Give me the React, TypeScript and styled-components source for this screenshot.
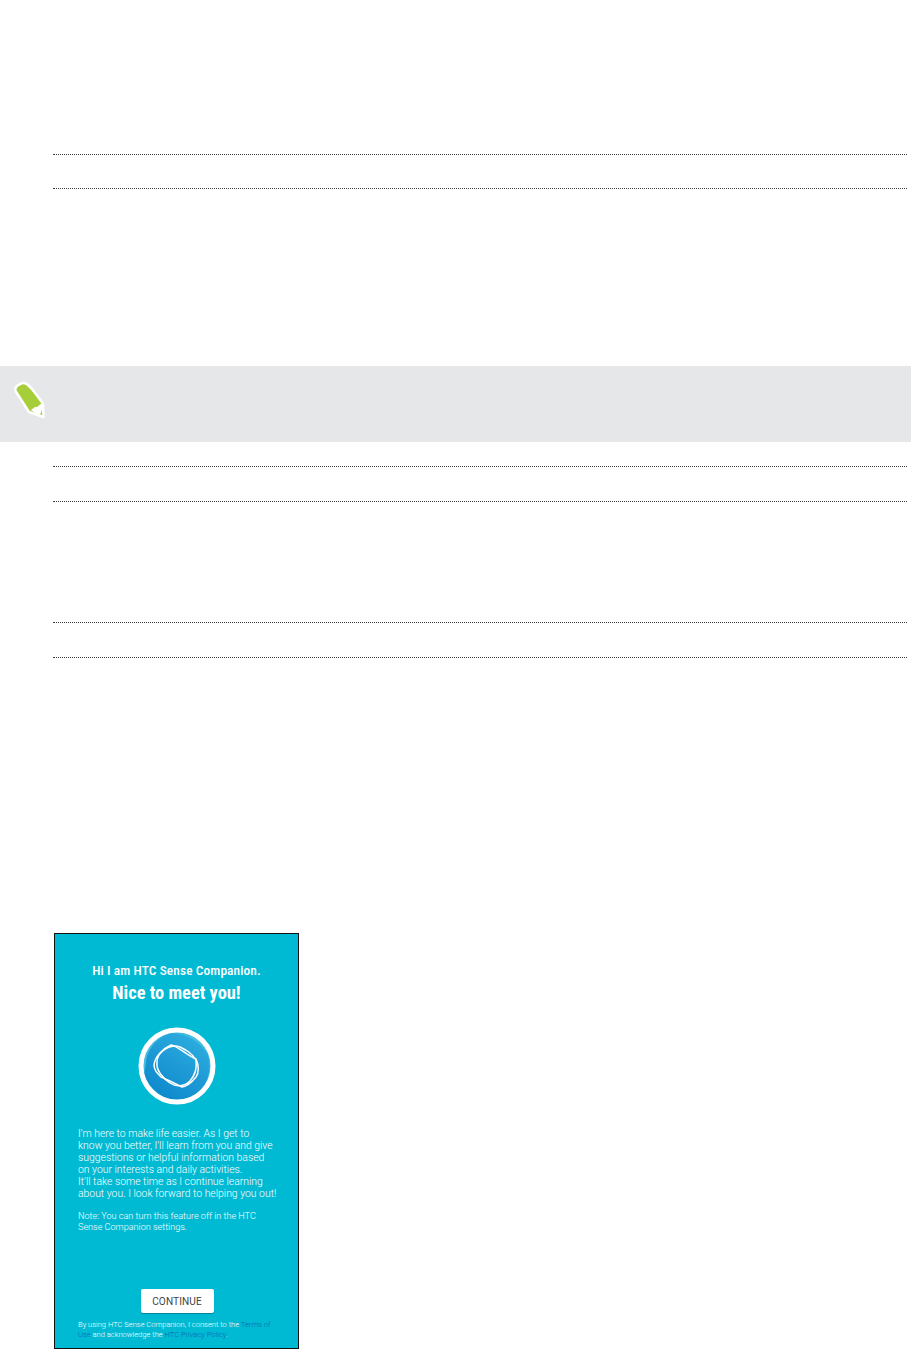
import { FC } from 'react'
import styled, { createGlobalStyle } from 'styled-components'

const Global = createGlobalStyle`
  html, body {
    margin: 0;
    padding: 0;
    background: #fff;
    font-family: Roboto, "Liberation Sans", sans-serif;
  }
`

const Page = styled.div`
  width: 911px;
  height: 1349px;
  overflow: hidden;
  padding-top: 154px;
  box-sizing: border-box;
`

const Rows = styled.div<{ $height: number; $after: number }>`
  margin: 0 4px ${(p) => p.$after}px 53px;
  height: ${(p) => p.$height}px;
  box-sizing: border-box;
  border-top: 1px dotted #3c3c3c;
  border-bottom: 1px dotted #3c3c3c;
`

const Note = styled.div`
  height: 76px;
  margin-bottom: 24px;
  background: #e6e7e8;
  padding: 14px 0 0 13px;
  box-sizing: border-box;
`

const Phone = styled.div`
  width: 245px;
  height: 416px;
  margin: 275px 0 0 54px;
  box-sizing: border-box;
  border: 1px solid #111;
  background: #00bad4;
  color: #fff;
  display: flex;
  flex-direction: column;
  align-items: center;
  padding-top: 29px;
`

const Greeting = styled.div`
  font-size: 13.4px;
  line-height: 16px;
  font-weight: 500;
  font-stretch: condensed;
  letter-spacing: 0.1px;
`

const Title = styled.div`
  font-size: 18.4px;
  line-height: 22px;
  font-weight: 700;
  font-stretch: condensed;
  margin-top: 3px;
`

const Badge = styled.svg`
  display: block;
  width: 79px;
  height: 79px;
  margin: 23px 0 0 1px;
`

const Copy = styled.div`
  align-self: stretch;
  padding: 0 15px 0 23px;
  margin-top: 22px;
  font-size: 10.4px;
  line-height: 12px;
  font-weight: 300;
  white-space: nowrap;
`

const Small = styled(Copy)`
  margin-top: 11px;
  font-size: 9.1px;
  line-height: 10.5px;
`

const Continue = styled.div`
  width: 73px;
  height: 24px;
  margin-top: 57px;
  margin-left: 1px;
  background: #fff;
  border-radius: 2px;
  box-shadow: 0 1px 1px rgba(0, 0, 0, 0.3);
  color: #444;
  font-size: 10.1px;
  font-weight: 400;
  letter-spacing: 0.1px;
  display: flex;
  align-items: center;
  justify-content: center;
`

const Legal = styled(Copy)`
  margin-top: 7px;
  font-size: 7.55px;
  line-height: 10px;
`

const Link = styled.span`
  color: #0a62ae;
`

const Pencil: FC = () => (
  <svg width="36" height="44" viewBox="0 0 36 44">
    <path
      d="M2.5 11 Q1.5 8 4 6 L8 3.5 Q12 2 15 5 L19 9 L30 23.5 L30.5 37 L16 32 Z"
      fill="#a6ce39"
      stroke="#fff"
      strokeWidth="2.5"
      strokeLinejoin="round"
    />
    <path d="M18 30 L22 27 L24 27 L29 23 L29 30 L27 35 L22 33 Z" fill="#fff" />
  </svg>
)

const CompanionBadge: FC = () => (
  <Badge viewBox="0 0 79 79">
    <defs>
      <linearGradient id="disc" x1="0.2" y1="1" x2="0.8" y2="0">
        <stop offset="0" stopColor="#0c86cb" />
        <stop offset="1" stopColor="#2eaee0" />
      </linearGradient>
    </defs>
    <circle cx="39" cy="39" r="36" fill="#45bcdf" />
    <path
      d="M8 36 C9 22 20 8 36 6 C48 7 62 14 70 28 C74 42 70 58 58 68 C50 73 42 71 36 74 C24 72 12 62 6 48 Z"
      fill="url(#disc)"
    />
    <circle cx="39" cy="39" r="36" fill="none" stroke="#fff" strokeWidth="5" />
    <path
      d="M16 38 C17 30 24 22 33 18 C40 19 48 28 58 32 C61 38 61 46 58 50 C54 55 50 59 44 60 C36 56 28 52 23 50 C19 46 16 43 16 38 Z"
      fill="none"
      stroke="#fff"
      strokeWidth="1.5"
    />
    <path
      d="M20 30 C24 22 34 17 42 20 C48 23 54 26 58 33 C59 40 58 47 52 54 C46 60 38 60 32 56 C26 52 18 44 19 36 C19 34 19 32 20 30 Z"
      fill="none"
      stroke="#fff"
      strokeWidth="1.5"
    />
  </Badge>
)

const App: FC = () => (
  <Page>
    <Global />
    <Rows $height={35} $after={177} />
    <Note>
      <Pencil />
    </Note>
    <Rows $height={36} $after={120} />
    <Rows $height={36} $after={0} />
    <Phone>
      <Greeting>Hi I am HTC Sense Companion.</Greeting>
      <Title>Nice to meet you!</Title>
      <CompanionBadge />
      <Copy>
        I'm here to make life easier. As I get to
        <br />
        know you better, I'll learn from you and give
        <br />
        suggestions or helpful information based
        <br />
        on your interests and daily activities.
        <br />
        It'll take some time as I continue learning
        <br />
        about you. I look forward to helping you out!
      </Copy>
      <Small>
        Note: You can turn this feature off in the HTC
        <br />
        Sense Companion settings.
      </Small>
      <Continue>CONTINUE</Continue>
      <Legal>
        By using HTC Sense Companion, I consent to the <Link>Terms of</Link>
        <br />
        <Link>Use</Link> and acknowledge the <Link>HTC Privacy Policy</Link>.
      </Legal>
    </Phone>
  </Page>
)

export default App
